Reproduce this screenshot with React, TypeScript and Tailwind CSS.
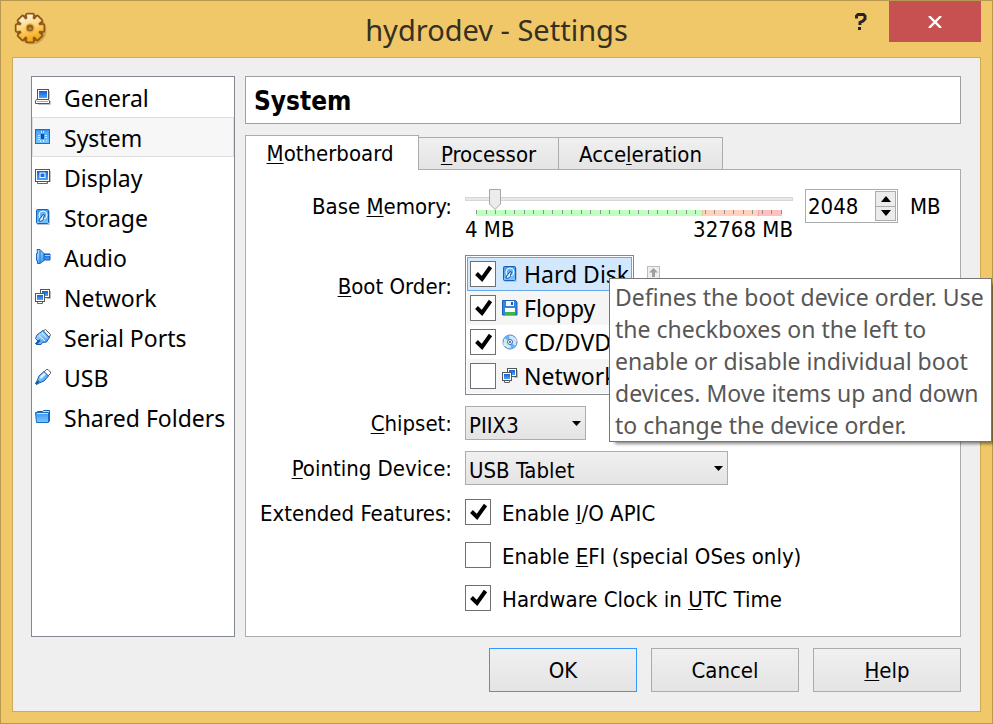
import React, { useState } from "react";

const uiFont = "font-['Noto_Sans',sans-serif]";
const formFont = "font-['DejaVu_Sans_Condensed','DejaVu_Sans',sans-serif]";

function Defs() {
  return (
    <svg className="absolute h-0 w-0" aria-hidden="true">
      <defs>
        <linearGradient id="screen" x1="0" y1="0" x2="0" y2="1">
          <stop offset="0" stopColor="#1260d8" />
          <stop offset="1" stopColor="#46a6ff" />
        </linearGradient>
        <linearGradient id="sky" x1="0" y1="0" x2="1" y2="1">
          <stop offset="0" stopColor="#c5ebff" />
          <stop offset="1" stopColor="#2d8ff0" />
        </linearGradient>
        <linearGradient id="chip" x1="0" y1="0" x2="0" y2="1">
          <stop offset="0" stopColor="#3d97f2" />
          <stop offset="1" stopColor="#78c8ff" />
        </linearGradient>
        <linearGradient id="gold" x1="0" y1="0" x2="0.3" y2="1">
          <stop offset="0" stopColor="#ffffff" />
          <stop offset="0.5" stopColor="#fcd882" />
          <stop offset="1" stopColor="#f5ac18" />
        </linearGradient>
      </defs>
    </svg>
  );
}

const glyphs = {
  general: (
    <>
      <path d="M3 15.5h12.5V12M14.5 10V2" stroke="#c4c4c4" fill="none" />
      <rect x="2.5" y="0.5" width="11" height="10" fill="#fff" stroke="#555" />
      <rect x="4" y="2" width="8" height="7" fill="url(#screen)" />
      <path d="M1.5 10.5h12l1 1.5v2.5H.5V12z" fill="#fff" stroke="#555" />
      <path d="M2 12.5h11" stroke="#aaa" />
    </>
  ),
  system: (
    <>
      <rect x="0.5" y="0.5" width="14" height="14" fill="url(#chip)" stroke="#1c6cc4" />
      <rect x="6" y="5" width="3" height="5" fill="#174f96" />
      <path
        d="M3 3.500l1 1M12 3.500l-1 1M6.500 2v2M8.500 2v2M3 6.500h2M3 8.500h2M3 10.500h2M10 6.500h2M10 8.500h2M5.500 11v2M8.500 11v2M11 11l1 1"
        stroke="#c4ecff"
      />
    </>
  ),
  display: (
    <>
      <path d="M2.500 13v1.500h10V13M12 12.500v1" fill="#fff" stroke="#666" />
      <path d="M15.500 2v11" stroke="#c4c4c4" />
      <rect x="0.5" y="0.5" width="14" height="12" fill="#fff" stroke="#555" />
      <rect x="2" y="2" width="11" height="9" fill="url(#screen)" />
      <rect x="5" y="4" width="5" height="4.500" fill="#1f6fe0" stroke="#fff" />
    </>
  ),
  storage: (
    <>
      <path d="M2 15.500h12.500V2" fill="none" stroke="#b9c4d0" />
      <rect x="1.5" y="0.5" width="12" height="14" rx="1" fill="url(#chip)" stroke="#155fb5" />
      <circle cx="8" cy="6" r="4" fill="#5fb5fa" stroke="#fff" />
      <path d="M4 11L8 5.500 9.500 6 8.500 9C9 11 6 13 4 12z" fill="#d7f0ff" stroke="#134d95" />
    </>
  ),
  audio: (
    <>
      <path d="M7 5h8v6H7z" fill="url(#screen)" stroke="#1558a8" />
      <path d="M2 .5h3l4 4v7l-4 3H2.500v-3h-1v-7h1z" fill="url(#sky)" stroke="#1766bd" />
      <path d="M5 1v13" stroke="#1f6fc8" />
      <path d="M10 6.500h5" stroke="#9fd4ff" />
    </>
  ),
  network: (
    <>
      <rect x="5.5" y="0.5" width="9" height="8" fill="#fff" stroke="#555" />
      <rect x="7" y="2" width="6" height="5" fill="url(#screen)" />
      <path d="M12 9.500h3.500V2" fill="none" stroke="#bbb" />
      <rect x="0.5" y="4.5" width="9" height="8" fill="#fff" stroke="#555" />
      <rect x="2" y="6" width="6" height="5" fill="url(#screen)" />
      <path d="M2.500 13v1.500h5V13" fill="#fff" stroke="#666" />
    </>
  ),
  serial: (
    <>
      <path d="M8 2L10.500.5 15.500 5.500 14 9z" fill="#fff" stroke="#555" />
      <path d="M8 1.500l6.500 7-3 4.500-4 .5-1.500 2H2L.5 14.500 3 12 .5 9.500 2 6z" fill="url(#sky)" stroke="#155ca9" />
      <path d="M4 6.500l6 5.500M7 4l5 5.500" stroke="#e8f8ff" />
      <path d="M1 15l4-4" stroke="#155ca9" strokeWidth="2" />
    </>
  ),
  usb: (
    <>
      <path d="M9 3L11.500.5H13L15.500 3v1.500L13 7z" fill="#fff" stroke="#555" />
      <path d="M9 2.500l4.500 4.500L9 12l-5 2-2.500 1.500-1-1L2 12l2-5z" fill="url(#sky)" stroke="#155ca9" />
      <path d="M5.500 9L10 4.500" stroke="#e8f8ff" strokeWidth="2" />
      <path d="M1 15l3-3" stroke="#155ca9" strokeWidth="2" />
    </>
  ),
  folder: (
    <>
      <path d="M2.500 12.500v-10h5l1-1h6v11" fill="#bfe4ff" stroke="#155fb5" />
      <path d="M.5 3.500h13v10H1.500z" fill="url(#chip)" stroke="#1c6cc4" />
      <path d="M2 4.500h11" stroke="#b9e3ff" />
    </>
  ),
  floppy: (
    <>
      <path d="M.5.5h13L15 2v13H.5z" fill="#2f86df" stroke="#1a62b8" />
      <rect x="4" y="1" width="8" height="5" fill="#f2f6fa" />
      <rect x="9" y="2" width="2" height="3" fill="#2a5c93" />
      <rect x="3" y="8" width="10" height="4" fill="#fff" />
      <rect x="3" y="12" width="10" height="3" fill="#3bb54a" />
    </>
  ),
  disc: (
    <>
      <circle cx="8" cy="8" r="7" fill="#cfe9fb" stroke="#4c83c6" />
      <path d="M8 8L2.500 4A6.500 6.500 0 0 1 7 1.500z" fill="#5cb3f5" />
      <path d="M8 8l5.500 4A6.500 6.500 0 0 1 9 14.500z" fill="#5cb3f5" />
      <path d="M8 8l6-4.500A6.500 6.500 0 0 1 14.500 8z" fill="#e4d2fa" />
      <path d="M8 8l-6 4.500A6.500 6.500 0 0 1 1.500 8z" fill="#d2f3d8" />
      <circle cx="8" cy="8" r="2.5" fill="#fff" stroke="#3a6cb0" />
      <circle cx="8" cy="8" r="1" fill="#27518c" />
    </>
  ),
};

type GlyphName = keyof typeof glyphs;

function Glyph({ name }: { name: GlyphName }) {
  return (
    <svg width="16" height="16" viewBox="0 0 16 16" aria-hidden="true" className="shrink-0">
      {glyphs[name]}
    </svg>
  );
}

// Eight-toothed wheel centred on (16, 16).
const gearOutline = Array.from({ length: 8 }, (_, i) => {
  const at = (radius: number, degrees: number) => {
    const a = ((i * 45 + degrees) * Math.PI) / 180;
    return `${(16 + radius * Math.cos(a)).toFixed(2)},${(16 + radius * Math.sin(a)).toFixed(2)}`;
  };
  return [at(9.5, -15), at(13.5, -12), at(13.5, 12), at(9.5, 15)].join(" ");
}).join(" ");

function GearLogo() {
  return (
    <svg width="34" height="34" viewBox="0 0 34 34" aria-hidden="true" className="ml-0.5">
      <circle cx="18" cy="18" r="14.5" fill="#a77a28" opacity="0.45" />
      <circle cx="16" cy="16" r="14" fill="#a8691a" />
      <polygon points={gearOutline} fill="#8f5614" stroke="#8f5614" strokeWidth="4" strokeLinejoin="round" />
      <polygon points={gearOutline} fill="url(#gold)" stroke="url(#gold)" strokeWidth="0.5" strokeLinejoin="round" />
      <circle cx="16" cy="16" r="4.5" fill="#dba53c" />
      <circle cx="16" cy="16" r="3.2" fill="#8f5f1c" />
      <circle cx="16" cy="16.5" r="1.5" fill="#b98a3c" />
    </svg>
  );
}

function Key({ children }: { children: string }) {
  return (
    <span className="underline decoration-1 underline-offset-2 [text-decoration-skip-ink:none]">{children}</span>
  );
}

function CheckBox({ id, defaultChecked }: { id: string; defaultChecked?: boolean }) {
  return (
    <span className="grid shrink-0">
      <input
        id={id}
        type="checkbox"
        defaultChecked={defaultChecked}
        className="peer col-start-1 row-start-1 size-[26px] appearance-none border border-[#707070] bg-white"
      />
      <svg
        viewBox="0 0 26 26"
        aria-hidden="true"
        className="pointer-events-none invisible col-start-1 row-start-1 size-[26px] peer-checked:visible"
      >
        <path d="M6.5 12.500L12 18 20.500 6" fill="none" stroke="#000" strokeWidth="4" />
      </svg>
    </span>
  );
}

const sections: { label: string; icon: GlyphName }[] = [
  { label: "General", icon: "general" },
  { label: "System", icon: "system" },
  { label: "Display", icon: "display" },
  { label: "Storage", icon: "storage" },
  { label: "Audio", icon: "audio" },
  { label: "Network", icon: "network" },
  { label: "Serial Ports", icon: "serial" },
  { label: "USB", icon: "usb" },
  { label: "Shared Folders", icon: "folder" },
];

const bootDevices: { label: string; icon: GlyphName; on: boolean; row: string }[] = [
  { label: "Hard Disk", icon: "storage", on: true, row: "border-[#66a7e8] bg-[#d1e8ff]" },
  { label: "Floppy", icon: "floppy", on: true, row: "border-[#f5f5f5] bg-[#f5f5f5]" },
  { label: "CD/DVD", icon: "disc", on: true, row: "border-white bg-white" },
  { label: "Network", icon: "network", on: false, row: "border-[#f5f5f5] bg-[#f5f5f5]" },
];

function MemorySlider({ value, onChange }: { value: number; onChange: (v: number) => void }) {
  const max = 32768;
  return (
    <div className="w-[328px]">
      <div className="relative h-[27px]">
        <div className="absolute inset-x-0 top-2 h-1 border border-[#d6d6d6] bg-[#e7eaea]" />
        <div className="absolute inset-x-[11px] top-[21px] flex h-1.5">
          <div className="w-[74%] bg-[#c0ffc0]" />
          <div className="w-[18%] border-l border-[#e6c79c] bg-[#ffd3c0]" />
          <div className="w-[8%] border-l border-[#f0a0a0] bg-[#ffc0c0]" />
        </div>
        <div className="absolute inset-x-[11px] top-[21px] flex h-1 justify-between">
          {Array.from({ length: 33 }, (_, i) => (
            <span key={i} className="w-px bg-[#909090]" />
          ))}
        </div>
        <div className="absolute inset-x-[11px] top-0">
          <svg
            width="12"
            height="22"
            viewBox="0 0 12 22"
            aria-hidden="true"
            className="relative -translate-x-1/2"
            style={{ left: `${(value / max) * 100}%` }}
          >
            <path d="M.5.5h11V15L6 20.500.5 15z" fill="#ececec" stroke="#a6a6a6" />
          </svg>
        </div>
        <input
          id="memory"
          type="range"
          min={4}
          max={max}
          value={value}
          onChange={(e) => onChange(Number(e.target.value))}
          className="absolute inset-x-0 top-0 h-6 w-full opacity-0"
        />
      </div>
      <div className="flex justify-between leading-7">
        <span>4 MB</span>
        <span>32768 MB</span>
      </div>
    </div>
  );
}

function Combo({ id, value, width }: { id: string; value: string; width: string }) {
  return (
    <div className={`grid items-center ${width}`}>
      <select
        id={id}
        className="col-start-1 row-start-1 h-[34px] w-full appearance-none border border-[#acacac] bg-linear-to-b from-[#f0f0f0] to-[#e4e4e4] px-[3px] pt-0.5"
      >
        <option>{value}</option>
      </select>
      <svg
        width="9"
        height="5"
        viewBox="0 0 9 5"
        aria-hidden="true"
        className="pointer-events-none col-start-1 row-start-1 mr-[5px] justify-self-end"
      >
        <path d="M0 0h9L4.500 5z" fill="#000" />
      </svg>
    </div>
  );
}

const tabClass = "border border-b-0 border-[#acacac]";
const idleTab = "h-8 bg-linear-to-b from-[#f0f0f0] to-[#e4e4e4]";
const pushButton = "h-11 w-[148px] border bg-linear-to-b from-[#f0f0f0] to-[#e4e4e4]";
const rowLabel = "h-[34px] text-right leading-9";

export default function App() {
  const [memory, setMemory] = useState(2048);
  const [active, setActive] = useState("System");

  return (
    <div className={`flex min-h-screen flex-col border border-[#b8994f] bg-[#f0c869] px-[11px] pb-[11px] text-black ${uiFont}`}>
      <Defs />
      <header className="grid h-14 grid-cols-[1fr_auto_1fr] items-center">
        <GearLogo />
        <h1 className="pt-0.5 text-[29px] text-[#35301f]">hydrodev - Settings</h1>
        <div className="flex self-start justify-self-end">
          <button aria-label="Help" className="flex h-[41px] w-14 items-center justify-center">
            <svg width="12" height="17" viewBox="0 0 12 17" aria-hidden="true">
              <path d="M1.500 5.500V3L3 1.500h5.500L10 3v3L8 8 5 9.500V12" fill="none" stroke="#262626" strokeWidth="3" />
              <rect x="3" y="14" width="3" height="3" fill="#262626" />
            </svg>
          </button>
          <button aria-label="Close" className="flex h-[41px] w-[92px] items-center justify-center bg-[#c75050]">
            <svg width="14" height="12" viewBox="0 0 14 12" aria-hidden="true">
              <path d="M1 0l12 12M13 0L1 12" stroke="#fff" strokeWidth="2.4" />
            </svg>
          </button>
        </div>
      </header>

      <main className="flex grow flex-col border border-[#cfaa58] bg-[#efefef] pt-[18px] pr-[19px] pb-[19px] pl-[18px]">
        <div className="flex grow gap-2.5">
          <nav className="w-[204px] shrink-0 border border-[#828790] bg-white">
            <ul>
              {sections.map((s) => (
                <li key={s.label}>
                  <button
                    onClick={() => setActive(s.label)}
                    className={`flex h-10 w-full items-center gap-[13px] border pl-0.5 text-[23px] whitespace-nowrap ${
                      s.label === active ? "border-[#dedede] bg-[#f7f7f7]" : "border-transparent"
                    }`}
                  >
                    <Glyph name={s.icon} />
                    <span className="pt-0.5">{s.label}</span>
                  </button>
                </li>
              ))}
            </ul>
          </nav>

          <section className={`flex grow flex-col text-[22px] ${formFont}`}>
            <h2 className="mb-[11px] flex h-12 items-center border border-[#a0a0a0] bg-white px-2 pt-0.5 text-[26px] font-bold">
              System
            </h2>
            <div role="tablist" className="flex items-end">
              <button role="tab" aria-selected="true" className={`${tabClass} relative -mb-px h-[35px] w-[174px] bg-white pr-1`}>
                <Key>M</Key>otherboard
              </button>
              <button role="tab" aria-selected="false" className={`${tabClass} ${idleTab} w-[140px] border-l-0`}>
                <Key>P</Key>rocessor
              </button>
              <button role="tab" aria-selected="false" className={`${tabClass} ${idleTab} w-[164px] border-l-0`}>
                Acce<Key>l</Key>eration
              </button>
            </div>

            <div
              role="tabpanel"
              className="grid grow grid-cols-[206px_1fr] content-start gap-x-[13px] gap-y-[11px] border border-[#acacac] bg-white pt-[19px]"
            >
              <label htmlFor="memory" className={rowLabel}>
                Base <Key>M</Key>emory:
              </label>
              <div className="flex h-[55px] gap-3">
                <MemorySlider value={memory} onChange={setMemory} />
                <div className="flex h-[34px] items-center gap-3">
                  <div className="flex h-full w-[93px] border border-[#acacac] p-px">
                    <input
                      aria-label="Base memory in megabytes"
                      value={memory}
                      onChange={(e) => setMemory(Number(e.target.value) || 0)}
                      className="w-0 grow pl-px outline-none"
                    />
                    <div className="flex w-[21px] flex-col">
                      <button
                        aria-label="Increase"
                        onClick={() => setMemory(memory + 1)}
                        className="flex grow items-center justify-center border border-[#acacac] bg-[#ececec]"
                      >
                        <svg width="10" height="6" viewBox="0 0 10 6" aria-hidden="true">
                          <path d="M5 0l5 6H0z" />
                        </svg>
                      </button>
                      <button
                        aria-label="Decrease"
                        onClick={() => setMemory(memory - 1)}
                        className="flex grow items-center justify-center border border-t-0 border-[#acacac] bg-[#ececec]"
                      >
                        <svg width="10" height="6" viewBox="0 0 10 6" aria-hidden="true">
                          <path d="M0 0h10L5 6z" />
                        </svg>
                      </button>
                    </div>
                  </div>
                  <span>MB</span>
                </div>
              </div>

              <span className="h-16 text-right leading-[64px]">
                <Key>B</Key>oot Order:
              </span>
              <div className="relative flex items-start gap-[13px]">
                <ul className={`w-[169px] border border-[#828790] p-px text-[23px] ${uiFont}`}>
                  {bootDevices.map((d) => (
                    <li key={d.label} className={`flex h-[34px] items-center gap-1.5 overflow-hidden border px-0.5 whitespace-nowrap ${d.row}`}>
                      <CheckBox id={`boot-${d.icon}`} defaultChecked={d.on} />
                      <Glyph name={d.icon} />
                      <label htmlFor={`boot-${d.icon}`} className="leading-8">{d.label}</label>
                    </li>
                  ))}
                </ul>
                <button
                  aria-label="Move up"
                  className="mt-[11px] flex size-[13px] items-center justify-center border border-[#bcbcbc] bg-[#efefef]"
                >
                  <svg width="9" height="9" viewBox="0 0 9 9" aria-hidden="true">
                    <path d="M4.500 0L9 4.500H6V9H3V4.500H0z" fill="#a0a0a0" />
                  </svg>
                </button>
                <div
                  role="tooltip"
                  className={`absolute top-[23px] left-36 w-[383px] border border-[#767676] bg-white pt-0.5 pl-[5px] text-[23px] leading-8 whitespace-nowrap text-[#575757] shadow-[4px_4px_3px_-2px_rgba(0,0,0,0.45)] ${uiFont}`}
                >
                  Defines the boot device order. Use
                  <br />
                  the checkboxes on the left to
                  <br />
                  enable or disable individual boot
                  <br />
                  devices. Move items up and down
                  <br />
                  to change the device order.
                </div>
              </div>

              <label htmlFor="chipset" className={rowLabel}>
                <Key>C</Key>hipset:
              </label>
              <Combo id="chipset" value="PIIX3" width="w-[121px]" />

              <label htmlFor="pointing" className={rowLabel}>
                <Key>P</Key>ointing Device:
              </label>
              <Combo id="pointing" value="USB Tablet" width="w-[263px]" />

              <span className="pt-[3px] text-right leading-[30px]">Extended Features:</span>
              <div className="flex flex-col gap-[17px] pt-[3px] leading-[30px]">
                <div className="flex h-[26px] gap-[11px]">
                  <CheckBox id="apic" defaultChecked />
                  <label htmlFor="apic">
                    Enable <Key>I</Key>/O APIC
                  </label>
                </div>
                <div className="flex h-[26px] gap-[11px]">
                  <CheckBox id="efi" />
                  <label htmlFor="efi">
                    Enable <Key>E</Key>FI (special OSes only)
                  </label>
                </div>
                <div className="flex h-[26px] gap-[11px]">
                  <CheckBox id="utc" defaultChecked />
                  <label htmlFor="utc">
                    Hardware Clock in <Key>U</Key>TC Time
                  </label>
                </div>
              </div>
            </div>
          </section>
        </div>

        <div className={`mt-[11px] flex justify-end gap-3.5 text-[22px] ${formFont}`}>
          <button className={`${pushButton} border-[#3399ff]`}>OK</button>
          <button className={`${pushButton} border-[#acacac]`}>Cancel</button>
          <button className={`${pushButton} border-[#acacac]`}>
            <Key>H</Key>elp
          </button>
        </div>
      </main>
    </div>
  );
}
